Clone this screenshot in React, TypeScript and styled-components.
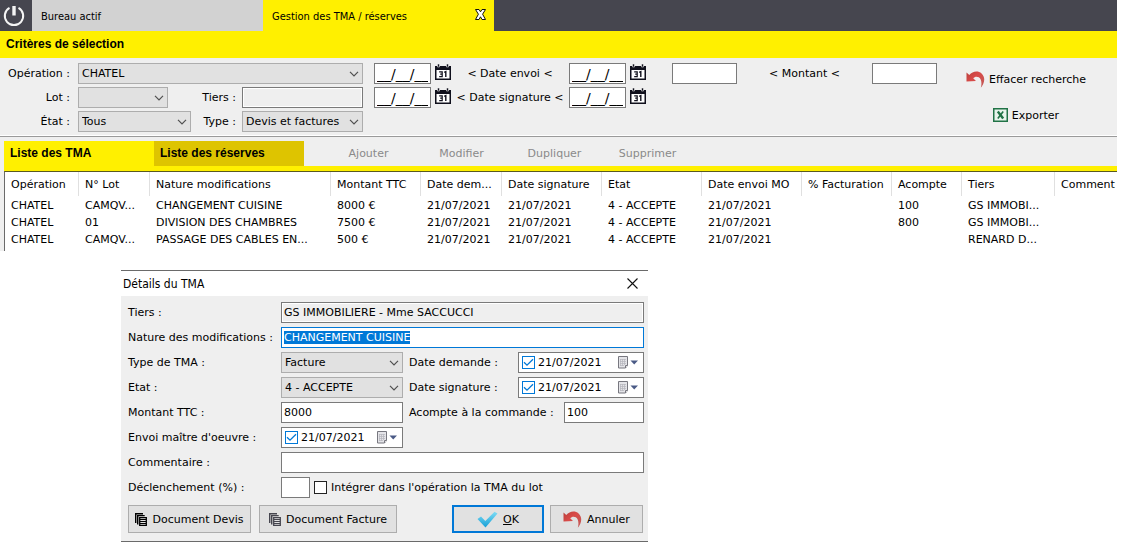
import React, { useEffect, useRef } from "react";
import styled, { createGlobalStyle, css } from "styled-components";

const GlobalStyle = createGlobalStyle`
  *, *::before, *::after { box-sizing: border-box; }
  body { margin: 0; background: #fff; }
  body, button, input, select {
    font-family: "DejaVu Sans", Verdana, sans-serif;
    font-size: 11px;
    color: #000;
  }
  button, input, select { margin: 0; border-radius: 0; }
`;

const Page = styled.main`
  padding-right: 15px;
`;

/* ---------- window tabs ---------- */
const TopBar = styled.header`
  display: flex;
  height: 31px;
  background: #46464f;
`;

const PowerButton = styled.button`
  display: flex;
  align-items: center;
  justify-content: center;
  width: 32px;
  padding: 0;
  padding-right: 4px;
  border: 0;
  background: none;
`;

const WindowTab = styled.div<{ $active?: boolean }>`
  display: flex;
  justify-content: space-between;
  width: 231px;
  padding: 0 8px 0 9px;
  line-height: 34px;
  font-family: "DejaVu Sans Condensed", Tahoma, sans-serif;
  background: ${(p) => (p.$active ? "#fff000" : "#d2d2d2")};
`;

const TabLabel = styled.button`
  padding: 0;
  border: 0;
  background: none;
  font: inherit;
`;

const TabClose = styled.button`
  display: flex;
  padding: 9px 0 0;
  border: 0;
  background: none;
`;

const SectionTitle = styled.h1`
  margin: 0;
  padding: 0 6px;
  font: bold 12px/27px "Liberation Sans", Arial, sans-serif;
  background: #fff000;
`;

/* ---------- form parts ---------- */
const box = css`
  height: 21px;
  border: 1px solid #7a7a7a;
  background: #fff;
`;

const TextBox = styled.input<{ $w?: number; $muted?: boolean }>`
  ${box}
  ${(p) => (p.$w ? `width: ${p.$w}px;` : "flex: 1; min-width: 0;")}
  padding: 0 2px;
  background: ${(p) => (p.$muted ? "#efefef" : "#fff")};
  box-shadow: inset 0 0 0 1px #fff;
  outline: 0;
  &:focus { border-color: #0078d7; }
  &::selection { background: #0078d7; color: #fff; }
`;

const DateMask = styled.input`
  ${box}
  width: 57px;
  padding: 0 2px;
  font-size: 14px;
`;

const SelectWrap = styled.span<{ $w?: number }>`
  position: relative;
  display: flex;
  ${(p) => (p.$w ? `width: ${p.$w}px;` : "flex: 1;")}
  svg { position: absolute; right: 4px; top: 8px; pointer-events: none; }
`;

const SelectBox = styled.select`
  appearance: none;
  width: 100%;
  height: 21px;
  padding: 0 16px 0 3px;
  border: 1px solid #adadad;
  background: #e1e1e1;
`;

function Select({ id, value, w }: { id: string; value: string; w?: number }) {
  return (
    <SelectWrap $w={w}>
      <SelectBox id={id} defaultValue={value}>
        <option>{value}</option>
      </SelectBox>
      <svg width="10" height="6" viewBox="0 0 10 6" fill="none" stroke="#505050" strokeWidth="1.2">
        <path d="M1 .8 5 4.8 9 .8" />
      </svg>
    </SelectWrap>
  );
}

/* ---------- search criteria ---------- */
const Criteria = styled.section`
  display: flex;
  align-items: flex-start;
  padding: 5px 0 3px;
  background: #efefef;
  border-bottom: 1px solid #fff;
`;

const MainFilters = styled.div`
  display: grid;
  grid-template-columns: 70px 285px;
  gap: 3px 8px;
  align-items: center;
  margin-right: 11px;
`;

const FilterLabel = styled.label`
  text-align: right;
  line-height: 21px;
`;

const FilterRow = styled.div`
  display: flex;
  justify-content: space-between;
`;

const Pair = styled.div`
  display: flex;
  gap: 6px;
`;

const DateFilters = styled.div`
  display: grid;
  grid-template-columns: 57px 16px 110px 57px 16px;
  gap: 3px 4px;
  align-items: start;
  margin-right: 26px;
`;

const RangeLabel = styled.span`
  text-align: center;
  white-space: nowrap;
  line-height: 21px;
`;

const AmountFilter = styled.div`
  display: grid;
  grid-template-columns: 65px 135px 65px;
  margin-right: 29px;
`;

const IconButton = styled.button`
  display: flex;
  align-items: center;
  gap: 4px;
  padding: 0;
  border: 0;
  background: none;
  white-space: nowrap;
`;

const CalendarButton = styled(IconButton)`
  padding-top: 1px;
`;

const SearchActions = styled.div`
  display: flex;
  flex-direction: column;
  align-items: center;
  gap: 20px;
  padding-top: 8px;
`;

/* ---------- list ---------- */
const ListPanel = styled.section`
  padding: 4px 0 0 4px;
  border-top: 1px solid #9a9a9a;
  background: #efefef;
`;

const ListBar = styled.div`
  display: flex;
  height: 30px;
  border-bottom: 5px solid #fff000;
`;

const ListTab = styled.button<{ $active?: boolean }>`
  width: 150px;
  padding: 0 6px;
  border: 0;
  text-align: left;
  font: bold 12px/25px "Liberation Sans", Arial, sans-serif;
  background: ${(p) => (p.$active ? "#fff000" : "#dec400")};
`;

const ListActions = styled.div`
  display: flex;
  padding-left: 18px;
`;

const ListAction = styled.button`
  width: 93px;
  padding: 0;
  border: 0;
  background: none;
  line-height: 25px;
  &:disabled { color: #8a8a8a; }
`;

const Table = styled.table`
  width: 100%;
  table-layout: fixed;
  border-collapse: separate;
  border-spacing: 0;
  border-top: 1px solid #5a5a20;
  border-left: 1px solid #6a6a6a;
  background: #fff;
`;

const HeadCell = styled.th`
  height: 24px;
  padding: 0 0 0 6px;
  border-right: 1px solid #e0e0e0;
  text-align: left;
  font-weight: normal;
  white-space: nowrap;
  overflow: hidden;
  &:last-child { border-right: 0; }
`;

const Cell = styled.td`
  height: 17px;
  padding: 0 0 0 6px;
  white-space: nowrap;
`;

const TableBody = styled.tbody`
  tr:first-child td { height: 18px; padding-top: 1px; }
  tr:last-child td { height: 20px; padding-bottom: 3px; }
`;

/* ---------- dialog ---------- */
const Dialog = styled.section`
  width: 527px;
  max-width: 100%;
  margin: 19px 0 0 121px;
  border: solid #6a6a6a;
  border-width: 1px 0;
  background: #efefef;
`;

const DialogTitle = styled.header`
  display: flex;
  align-items: center;
  justify-content: space-between;
  height: 25px;
  padding: 0 10px 0 2px;
  background: #fff;
  h2 { margin: 0; font: 12px "DejaVu Sans Condensed", Tahoma, sans-serif; }
  button { display: flex; padding: 0; border: 0; background: none; }
`;

const DialogForm = styled.form`
  display: flex;
  flex-direction: column;
  gap: 4px;
  padding: 6px 4px 8px 7px;
`;

const FormRow = styled.div`
  display: flex;
  align-items: center;
`;

const FormLabel = styled.label`
  width: 153px;
  line-height: 21px;
  white-space: nowrap;
`;

const SideLabel = styled.label<{ $w: number }>`
  width: ${(p) => p.$w}px;
  margin-left: 6px;
  white-space: nowrap;
`;

const DateField = styled.div<{ $w: number }>`
  ${box}
  display: flex;
  align-items: center;
  width: ${(p) => p.$w}px;
  padding: 0 5px 0 3px;
  input[type="text"] { flex: 1; min-width: 0; padding: 0 0 0 3px; border: 0; background: none; }
  button { display: flex; padding: 0; border: 0; background: none; }
`;

const CheckBox = styled.input<{ $dark?: boolean }>`
  appearance: none;
  flex: none;
  width: 13px;
  height: 13px;
  border: 1px solid ${(p) => (p.$dark ? "#222" : "#0078d7")};
  background: #fff;
  &:checked {
    background: #fff
      url("data:image/svg+xml,%3Csvg xmlns='http://www.w3.org/2000/svg' viewBox='0 0 11 11'%3E%3Cpath d='M1 5.300 4 8.200 10 2.200' fill='none' stroke='%230078d7' stroke-width='1.300'/%3E%3C/svg%3E");
  }
`;

const CheckLabel = styled.label`
  display: flex;
  align-items: center;
  gap: 4px;
  margin-left: 4px;
`;

const DialogButtons = styled.div`
  display: flex;
  gap: 6px;
  padding: 3px 1px 0 0;
`;

const PushButton = styled.button<{ $w: number; $default?: boolean }>`
  display: flex;
  align-items: center;
  justify-content: center;
  gap: 5px;
  width: ${(p) => p.$w}px;
  height: 28px;
  padding: 0;
  border: ${(p) => (p.$default ? "2px solid #0078d7" : "1px solid #adadad")};
  background: #e1e1e1;
  white-space: nowrap;
`;

const DocButtons = styled.div`
  display: flex;
  gap: 8px;
  margin-right: auto;
`;

/* ---------- icons ---------- */
const PowerIcon = () => (
  <svg width="22" height="22" viewBox="0 0 22 22" fill="none" stroke="#f4f4f4">
    <path d="M6.500 2.900A9.200 9.200 0 1 0 15.500 2.900" strokeWidth="2" />
    <path d="M11 1v9.500" strokeWidth="3.400" />
  </svg>
);

const TabCloseIcon = () => (
  <svg width="11" height="11" viewBox="0 0 11 11">
    <path
      d="M.5.500H4L5.500 2.800 7 .5h3.500L7.600 5.200l2.900 5.300H7L5.500 7.800 4 10.500H.5l2.900-5.300z"
      fill="#fff"
      stroke="#111"
    />
  </svg>
);

const CalendarIcon = () => (
  <svg width="16" height="16" viewBox="0 0 16 16">
    <path d="M0 2h16v14H0z" fill="#10101c" />
    <path d="M1.500 6h13v8.500h-13z" fill="#fff" />
    <path d="M2.500 0h2v3h-2zM11.500 0h2v3h-2z" fill="#10101c" stroke="#efefef" strokeWidth=".6" />
    <path d="M4.200 7.800h3v4.800h-3M5.200 10.200h2" fill="none" stroke="#10101c" strokeWidth="1.200" />
    <path d="M9.200 8.300 10.800 7.600v5.500" fill="none" stroke="#10101c" strokeWidth="1.400" />
  </svg>
);

const UndoIcon = () => (
  <svg width="19" height="17" viewBox="0 0 19 17">
    <defs>
      <linearGradient id="undo" x1="0" x2="1" y1="0" y2="1">
        <stop offset="0" stopColor="#b8403c" />
        <stop offset=".4" stopColor="#d94a48" />
        <stop offset="1" stopColor="#bf5a58" />
      </linearGradient>
    </defs>
    <path
      d="M.5 1.500 3.300 3.900C6.500 0 12 -.8 15.600 2.400 20.200 6.800 18 13.500 14.800 16.800 16 12.500 15.600 8 12.800 6.300 10.800 5.100 8.600 5.600 7.200 7.300L10 9.900.5 10.500z"
      fill="url(#undo)"
    />
  </svg>
);

const ExcelIcon = () => (
  <svg width="15" height="14" viewBox="0 0 15 14" fill="none" stroke="#217346">
    <path d="M.75.750h13.500v12.500H.75z" fill="#e8f5ec" strokeWidth="1.500" />
    <path d="M4.800 3.500 10.200 10.500" strokeWidth="2.400" />
    <path d="M10.200 3.500 4.800 10.500" strokeWidth="1.600" />
  </svg>
);

const PickerIcon = () => (
  <svg width="21" height="13" viewBox="0 0 21 13">
    <path d="M1.500.5h9v9L8.500 12h-7z" fill="#e4e4e8" stroke="#77777f" />
    <path d="M3 3.500h6M3 5.500h6M3 7.500h6M3 9.500h4M3.500 3v7M5.500 3v7M7.500 3v6" stroke="#b4b4bc" strokeWidth=".7" />
    <path d="M8.500 12V9.500h2" fill="#fff" stroke="#77777f" />
    <path d="M13.500 4.500h7.500L17.200 8.500z" fill="#4a5a86" />
  </svg>
);

const DocumentIcon = ({ color }: { color: string }) => (
  <svg width="12" height="13" viewBox="0 0 12 13" fill="none" stroke={color}>
    <path d="M.7 10V.7H8" strokeWidth="1.400" />
    <path d="M2.700 11.500V2.600h7" strokeWidth="1.400" />
    <path d="M4.700 4.600h6.600v7.700H4.700z" strokeWidth="1.300" />
    <path d="M5 6.500h6M5 8.500h6M5 10.500h6" strokeWidth="1.100" />
  </svg>
);

const TickIcon = () => (
  <svg width="21" height="17" viewBox="0 0 21 17">
    <defs>
      <linearGradient id="tick" x1="0" x2="0" y1="0" y2="1">
        <stop offset="0" stopColor="#7fdcf5" />
        <stop offset="1" stopColor="#149fd6" />
      </linearGradient>
    </defs>
    <path d="M.5 8 4 5.500 8.300 10 17.500.800 20.500 2.500 8.500 16.500z" fill="url(#tick)" />
  </svg>
);

const CloseIcon = () => (
  <svg width="11" height="11" viewBox="0 0 11 11" stroke="#111" strokeWidth="1.100">
    <path d="M.5.500l10 10M10.500.500l-10 10" />
  </svg>
);

/* ---------- data ---------- */
const columns: [string, number?][] = [
  ["Opération", 74],
  ["N° Lot", 71],
  ["Nature modifications", 181],
  ["Montant TTC", 90],
  ["Date dem...", 81],
  ["Date signature", 100],
  ["Etat", 100],
  ["Date envoi MO", 100],
  ["% Facturation", 90],
  ["Acompte", 70],
  ["Tiers", 93],
  ["Comment"],
];

const D = "21/07/2021";
const rows = [
  ["CHATEL", "CAMQV...", "CHANGEMENT CUISINE", "8000 €", D, D, "4 - ACCEPTE", D, "", "100", "GS IMMOBI...", ""],
  ["CHATEL", "01", "DIVISION DES CHAMBRES", "7500 €", D, D, "4 - ACCEPTE", D, "", "800", "GS IMMOBI...", ""],
  ["CHATEL", "CAMQV...", "PASSAGE DES CABLES EN...", "500 €", D, D, "4 - ACCEPTE", D, "", "", "RENARD D...", ""],
];

const DateRange = ({ label }: { label: string }) => (
  <>
    <DateMask aria-label={`${label} min`} defaultValue="__/__/__" />
    <CalendarButton type="button" aria-label={`${label} min`}><CalendarIcon /></CalendarButton>
    <RangeLabel>{`< ${label} <`}</RangeLabel>
    <DateMask aria-label={`${label} max`} defaultValue="__/__/__" />
    <CalendarButton type="button" aria-label={`${label} max`}><CalendarIcon /></CalendarButton>
  </>
);

const DatePicker = ({ id, w }: { id: string; w: number }) => (
  <DateField $w={w}>
    <CheckBox type="checkbox" defaultChecked aria-label="Date" />
    <input type="text" id={id} defaultValue={D} />
    <button type="button" aria-label="Calendrier"><PickerIcon /></button>
  </DateField>
);

export default function App() {
  const nature = useRef<HTMLInputElement>(null);
  useEffect(() => {
    nature.current?.focus();
    nature.current?.select();
  }, []);

  return (
    <>
      <GlobalStyle />
      <Page>
        <TopBar>
          <PowerButton aria-label="Quitter"><PowerIcon /></PowerButton>
          <WindowTab><TabLabel>Bureau actif</TabLabel></WindowTab>
          <WindowTab $active>
            <TabLabel>Gestion des TMA / réserves</TabLabel>
            <TabClose aria-label="Fermer"><TabCloseIcon /></TabClose>
          </WindowTab>
        </TopBar>
        <SectionTitle>Critères de sélection</SectionTitle>

        <Criteria>
          <MainFilters>
            <FilterLabel htmlFor="operation">Opération :</FilterLabel>
            <Select id="operation" value="CHATEL" />
            <FilterLabel htmlFor="lot">Lot :</FilterLabel>
            <FilterRow>
              <Select id="lot" value="" w={90} />
              <Pair>
                <FilterLabel htmlFor="tiers">Tiers :</FilterLabel>
                <TextBox id="tiers" $w={121} $muted />
              </Pair>
            </FilterRow>
            <FilterLabel htmlFor="etat">État :</FilterLabel>
            <FilterRow>
              <Select id="etat" value="Tous" w={113} />
              <Pair>
                <FilterLabel htmlFor="type">Type :</FilterLabel>
                <Select id="type" value="Devis et factures" w={121} />
              </Pair>
            </FilterRow>
          </MainFilters>
          <DateFilters>
            <DateRange label="Date envoi" />
            <DateRange label="Date signature" />
          </DateFilters>
          <AmountFilter>
            <TextBox aria-label="Montant min" $w={65} />
            <RangeLabel>{"< Montant <"}</RangeLabel>
            <TextBox aria-label="Montant max" $w={65} />
          </AmountFilter>
          <SearchActions>
            <IconButton type="button"><UndoIcon />Effacer recherche</IconButton>
            <IconButton type="button"><ExcelIcon />Exporter</IconButton>
          </SearchActions>
        </Criteria>

        <ListPanel>
          <ListBar>
            <ListTab $active>Liste des TMA</ListTab>
            <ListTab>Liste des réserves</ListTab>
            <ListActions>
              {["Ajouter", "Modifier", "Dupliquer", "Supprimer"].map((a) => (
                <ListAction key={a} disabled>{a}</ListAction>
              ))}
            </ListActions>
          </ListBar>
          <Table>
            <colgroup>
              {columns.map(([name, w]) => (
                <col key={name} width={w} />
              ))}
            </colgroup>
            <thead>
              <tr>{columns.map(([name]) => <HeadCell key={name}>{name}</HeadCell>)}</tr>
            </thead>
            <TableBody>
              {rows.map((r, i) => (
                <tr key={i}>{r.map((c, j) => <Cell key={j}>{c}</Cell>)}</tr>
              ))}
            </TableBody>
          </Table>
        </ListPanel>

        <Dialog role="dialog" aria-labelledby="dialog-title">
          <DialogTitle>
            <h2 id="dialog-title">Détails du TMA</h2>
            <button aria-label="Fermer"><CloseIcon /></button>
          </DialogTitle>
          <DialogForm>
            <FormRow>
              <FormLabel htmlFor="d-tiers">Tiers :</FormLabel>
              <TextBox id="d-tiers" $muted readOnly defaultValue="GS IMMOBILIERE - Mme SACCUCCI" />
            </FormRow>
            <FormRow>
              <FormLabel htmlFor="d-nature">Nature des modifications :</FormLabel>
              <TextBox id="d-nature" ref={nature} defaultValue="CHANGEMENT CUISINE" />
            </FormRow>
            <FormRow>
              <FormLabel htmlFor="d-type">Type de TMA :</FormLabel>
              <Select id="d-type" value="Facture" w={122} />
              <SideLabel htmlFor="d-demande" $w={109}>Date demande :</SideLabel>
              <DatePicker id="d-demande" w={126} />
            </FormRow>
            <FormRow>
              <FormLabel htmlFor="d-etat">Etat :</FormLabel>
              <Select id="d-etat" value="4 - ACCEPTE" w={122} />
              <SideLabel htmlFor="d-signature" $w={109}>Date signature :</SideLabel>
              <DatePicker id="d-signature" w={126} />
            </FormRow>
            <FormRow>
              <FormLabel htmlFor="d-montant">Montant TTC :</FormLabel>
              <TextBox id="d-montant" $w={122} defaultValue="8000" />
              <SideLabel htmlFor="d-acompte" $w={155}>Acompte à la commande :</SideLabel>
              <TextBox id="d-acompte" $w={80} defaultValue="100" />
            </FormRow>
            <FormRow>
              <FormLabel htmlFor="d-envoi">Envoi maître d'oeuvre :</FormLabel>
              <DatePicker id="d-envoi" w={122} />
            </FormRow>
            <FormRow>
              <FormLabel htmlFor="d-comment">Commentaire :</FormLabel>
              <TextBox id="d-comment" />
            </FormRow>
            <FormRow>
              <FormLabel htmlFor="d-pct">Déclenchement (%) :</FormLabel>
              <TextBox id="d-pct" $w={29} />
              <CheckLabel>
                <CheckBox type="checkbox" $dark />
                Intégrer dans l'opération la TMA du lot
              </CheckLabel>
            </FormRow>
            <DialogButtons>
              <DocButtons>
                <PushButton type="button" $w={123}><DocumentIcon color="#000" />Document Devis</PushButton>
                <PushButton type="button" $w={138}><DocumentIcon color="#46464f" />Document Facture</PushButton>
              </DocButtons>
              <PushButton type="button" $w={92} $default><TickIcon /><span><u>O</u>K</span></PushButton>
              <PushButton type="button" $w={93}><UndoIcon />Annuler</PushButton>
            </DialogButtons>
          </DialogForm>
        </Dialog>
      </Page>
    </>
  );
}
